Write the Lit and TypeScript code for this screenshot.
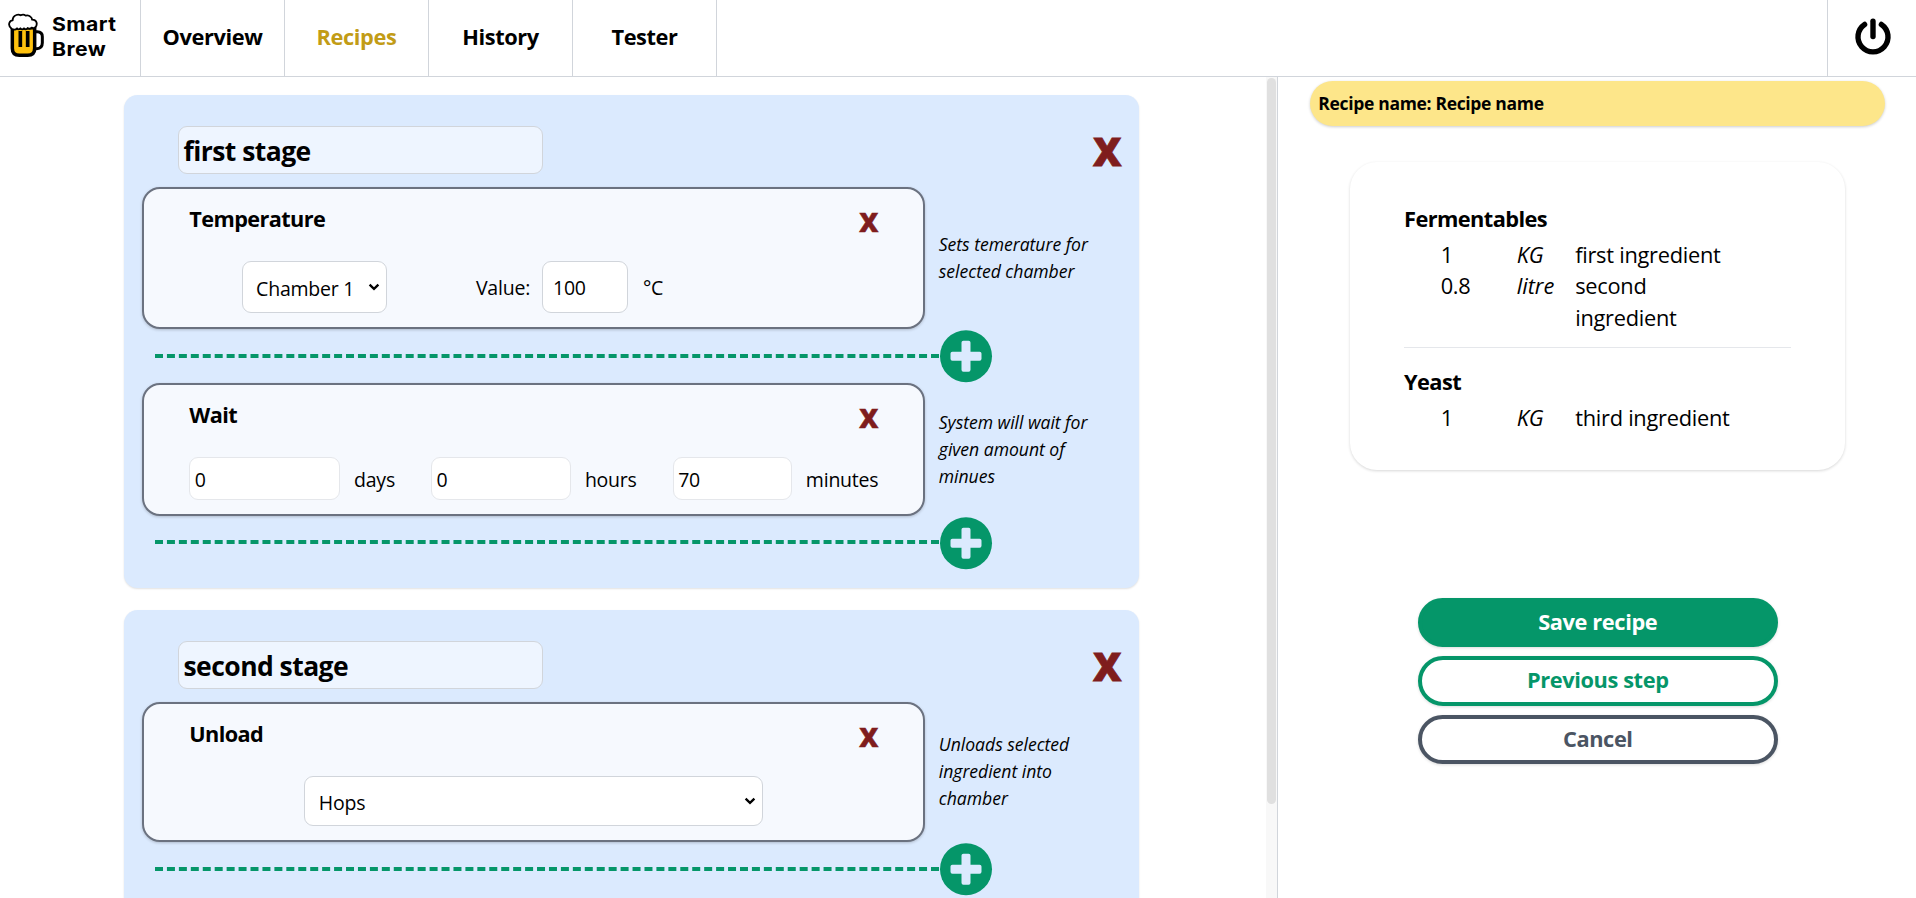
import { LitElement, html, css } from "lit";
import { customElement, property } from "lit/decorators.js";
import { classMap } from "lit/directives/class-map.js";

const base = css`
  * {
    box-sizing: border-box;
  }
  input,
  select,
  button {
    font: inherit;
    color: inherit;
    margin: 0;
    letter-spacing: inherit;
  }
`;

@customElement("app-header")
class AppHeader extends LitElement {
  static styles = [
    base,
    css`
      :host {
        display: flex;
        height: 77px;
        border-bottom: 1px solid #d1d5db;
        background: #fff;
      }
      .logo {
        display: flex;
        align-items: flex-start;
        width: 141px;
        padding: 13px 0 0 8px;
        border-right: 1px solid #d1d5db;
      }
      .mug {
        width: 37px;
        height: 45px;
        flex: none;
      }
      .brand {
        font: 700 19px/24.5px Inter, sans-serif;
        letter-spacing: 0.4px;
        margin: 0 0 0 6.5px;
        transform: scaleX(1.115);
        transform-origin: left;
      }
      .tab {
        width: 144px;
        height: 76px;
        border-right: 1px solid #d1d5db;
        text-align: center;
        font-size: 21.8px;
        font-weight: 700;
        line-height: 73px;
        letter-spacing: -0.4px;
      }
      .active {
        color: #c29c16;
      }
      .power {
        margin-left: auto;
        width: 89px;
        border-left: 1px solid #d1d5db;
        padding: 17px 0 0 26px;
      }
      .power svg {
        width: 38px;
        height: 38px;
        display: block;
      }
    `,
  ];
  render() {
    const tabs = ["Overview", "Recipes", "History", "Tester"];
    return html`
      <div class="logo">
        <svg class="mug" viewBox="24 38 111 135">
          <path d="M104 94h8q15 0 15 15v18q0 17-17 18h-6" fill="none" stroke="#000" stroke-width="9" />
          <path d="M37 82v62q0 21 21 21h25q21 0 21-21V82z" fill="#ffc20e" stroke="#000" stroke-width="10.5" />
          <path
            d="M35 85Q25 78 28 68q3-8 10-8Q38 48 49 44q7-3 13 1 8-5 15 1 8-3 14 3 6 5 5 9 12 0 14 10 1 9-4 13-5 4-11 1-5 6-12 1-5 7-11 1-6 6-11 0-5 6-10 0-6 7-16 1z"
            fill="#fff" stroke="#000" stroke-width="5.5" stroke-linejoin="round"
          />
          <path d="M61 92v48M83 92v48" stroke="#000" stroke-width="11" />
        </svg>
        <div class="brand">Smart<br />Brew</div>
      </div>
      ${tabs.map((t) => html`<div class=${classMap({ tab: true, active: t === "Recipes" })}>${t}</div>`)}
      <div class="power">
        <svg viewBox="0 0 38 38" fill="none" stroke="#000" stroke-linecap="round">
          <path d="M10.6 7.4a15 15 0 1 0 16.8 0" stroke-width="5.4" />
          <path d="M19 4.2v15.4" stroke-width="5.4" />
        </svg>
      </div>
    `;
  }
}

@customElement("recipe-step")
class RecipeStep extends LitElement {
  @property() name = "";
  @property() note = "";
  static styles = [
    base,
    css`
      :host {
        display: block;
      }
      .row {
        display: flex;
        align-items: center;
      }
      .card {
        width: 783px;
        flex: none;
        border: 2px solid #6b7280;
        border-radius: 18px;
        background: #f6f9fe;
        box-shadow: 0 1px 3px rgba(0, 0, 0, 0.2);
        padding: 0 44.6px 14px 45.3px;
      }
      .head {
        height: 72px;
        display: flex;
        justify-content: space-between;
        align-items: flex-start;
        padding-top: 14px;
      }
      .title {
        font-size: 21.7px;
        font-weight: 700;
        line-height: 32px;
        letter-spacing: -0.6px;
      }
      .remove {
        font-size: 26.5px;
        font-weight: 800;
        line-height: 39px;
        color: #7f1d1d;
        -webkit-text-stroke: 0.5px #7f1d1d;
      }
      .note {
        margin-left: 13.8px;
        width: 180px;
        font-size: 17.6px;
        line-height: 27px;
        font-style: italic;
        letter-spacing: -0.03px;
      }
      .connector {
        display: flex;
        align-items: flex-start;
        height: 54.2px;
        padding-left: 13px;
      }
      .dash {
        width: 784px;
        margin-top: 24.9px;
        border-top: 4px dashed #059669;
      }
      .plus {
        width: 53px;
        height: 53px;
        margin: 1.4px 0 0 1px;
      }
    `,
  ];
  render() {
    return html`
      <div class="row">
        <div class="card">
          <div class="head">
            <span class="title">${this.name}</span>
            <span class="remove">X</span>
          </div>
          <slot></slot>
        </div>
        <div class="note">${this.note}</div>
      </div>
      <div class="connector">
        <div class="dash"></div>
        <svg class="plus" viewBox="0 0 53 53">
          <circle cx="26" cy="26.2" r="26" fill="#059669" />
          <path
            d="M23.4 10.7h5.2q1.9 0 1.9 1.9v9.1h9.1q1.9 0 1.9 1.9v5.2q0 1.9-1.9 1.9h-9.1v9.1q0 1.9-1.9 1.9h-5.2q-1.9 0-1.9-1.9v-9.1h-9.1q-1.9 0-1.9-1.9v-5.2q0-1.9 1.9-1.9h9.1v-9.1q0-1.9 1.9-1.9z"
            fill="#dbeafe"
          />
        </svg>
      </div>
    `;
  }
}

@customElement("recipe-stage")
class RecipeStage extends LitElement {
  @property() name = "";
  static styles = [
    base,
    css`
      :host {
        display: block;
        flex: none;
        width: 1015.6px;
        padding: 0 17.6px 18.6px 18.4px;
        border-radius: 13.5px;
        background: #dbeafe;
        box-shadow: 0 1px 2px rgba(0, 0, 0, 0.12);
      }
      .head {
        display: flex;
        justify-content: space-between;
        align-items: flex-start;
        height: 92px;
        padding: 31.4px 0 0 36px;
      }
      .name {
        width: 365px;
        height: 47.3px;
        border: 1px solid #d1d5db;
        border-radius: 9px;
        background: #eef5ff;
        padding: 2px 4.5px 0;
        font-size: 26.5px;
        font-weight: 700;
        letter-spacing: -0.55px;
      }
      .remove {
        font-size: 39.5px;
        font-weight: 800;
        line-height: 48px;
        margin: 0.6px 0 0;
        color: #7f1d1d;
        -webkit-text-stroke: 0.8px #7f1d1d;
      }
    `,
  ];
  render() {
    return html`
      <div class="head">
        <input class="name" .value=${this.name} />
        <span class="remove">X</span>
      </div>
      <slot></slot>
    `;
  }
}

@customElement("recipe-summary")
class RecipeSummary extends LitElement {
  static styles = [
    base,
    css`
      :host {
        display: flex;
        flex-direction: column;
        align-items: center;
        width: 639px;
        border-left: 1px solid #d1d5db;
        padding: 4px 0 0 1.5px;
      }
      .name {
        width: 575px;
        height: 45px;
        border-radius: 23px;
        background: #fde68a;
        box-shadow: 0 1px 3px rgba(0, 0, 0, 0.2);
        padding-left: 8px;
        font-size: 17.5px;
        font-weight: 700;
        line-height: 45px;
        letter-spacing: -0.32px;
      }
      .list {
        width: 495.4px;
        height: 308px;
        margin-top: 35.5px;
        border-radius: 27px;
        box-shadow: 0 1px 3px rgba(0, 0, 0, 0.16);
        padding: 41.5px 54px 0;
      }
      .group + .group {
        border-top: 1px solid #e5e7eb;
        margin-top: 13.5px;
        padding-top: 18px;
      }
      .title {
        font-size: 21.8px;
        font-weight: 700;
        line-height: 31.5px;
        letter-spacing: -0.6px;
        margin-bottom: 4.5px;
      }
      .item {
        display: grid;
        grid-template-columns: 76px 58.5px 162px;
        padding-left: 36.6px;
        font-size: 21.8px;
        line-height: 31.4px;
        letter-spacing: -0.26px;
      }
      .unit {
        font-style: italic;
        letter-spacing: 0;
      }
      .actions {
        width: 360px;
        margin-top: 128px;
        display: grid;
        gap: 9px;
      }
      .btn {
        height: 49.5px;
        border: 4px solid #059669;
        border-radius: 25px;
        background: #fff;
        color: #059669;
        box-shadow: 0 1px 3px rgba(0, 0, 0, 0.14);
        font-size: 21.8px;
        font-weight: 700;
        line-height: 38px;
        letter-spacing: -0.4px;
        padding: 0 0 1px;
      }
      .primary {
        background: #059669;
        color: #fff;
      }
      .neutral {
        border-color: #4b5563;
        color: #4b5563;
      }
    `,
  ];
  render() {
    const groups = [
      { title: "Fermentables", items: [["1", "KG", "first ingredient"], ["0.8", "litre", "second ingredient"]] },
      { title: "Yeast", items: [["1", "KG", "third ingredient"]] },
    ];
    return html`
      <div class="name">Recipe name: Recipe name</div>
      <div class="list">
        ${groups.map(
          (g) => html`<div class="group">
            <div class="title">${g.title}</div>
            ${g.items.map(
              ([amount, unit, what]) => html`<div class="item">
                <span>${amount}</span><span class="unit">${unit}</span><span>${what}</span>
              </div>`
            )}
          </div>`
        )}
      </div>
      <div class="actions">
        <button class="btn primary">Save recipe</button>
        <button class="btn">Previous step</button>
        <button class="btn neutral">Cancel</button>
      </div>
    `;
  }
}

@customElement("app-root")
class AppRoot extends LitElement {
  static styles = [
    base,
    css`
      :host {
        display: flex;
        flex-direction: column;
        height: 898px;
        overflow: hidden;
        background: #fff;
        color: #000;
        font-family: "Open Sans", "Noto Sans", sans-serif;
      }
      .main {
        display: flex;
        flex: 1;
        min-height: 0;
      }
      .stages {
        display: flex;
        flex-direction: column;
        gap: 21.6px;
        flex: 1;
        overflow: hidden;
        padding: 18px 0 0 123.6px;
      }
      .track {
        width: 11px;
        background: #f8f8f8;
        padding-top: 1px;
      }
      .thumb {
        width: 9px;
        height: 726px;
        margin-left: 1px;
        border-radius: 5px;
        background: #e0e0e0;
      }
      .fields {
        display: flex;
        align-items: center;
        font-size: 19.5px;
        line-height: 28px;
        letter-spacing: -0.22px;
      }
      .box {
        border: 1px solid #d1d5db;
        border-radius: 9px;
        background: #fff;
        padding: 1px 9px 0;
      }
      .pick {
        display: grid;
        grid-template-columns: 1fr;
        align-items: center;
      }
      .pick select {
        grid-area: 1 / 1;
        appearance: none;
        width: 100%;
        height: 100%;
        padding: 4px 13px 0 13.5px;
      }
      .pick svg {
        grid-area: 1 / 1;
        justify-self: end;
        width: 12px;
        height: 8px;
        margin-right: 7px;
        pointer-events: none;
      }
      .temp {
        padding-left: 52.3px;
        height: 51.7px;
      }
      .chamber {
        width: 145px;
        height: 51.7px;
      }
      .label {
        width: 66px;
        margin-left: 89.4px;
      }
      .text {
        padding-top: 3px;
      }
      .degrees {
        width: 86.5px;
        height: 51.7px;
        margin-right: 14.5px;
        padding: 2px 9px 0 10px;
      }
      .wait {
        display: grid;
        grid-template-columns: repeat(3, minmax(0, 1fr));
        gap: 36px;
        height: 42.7px;
      }
      .span {
        display: flex;
        align-items: center;
        gap: 14px;
      }
      .count {
        flex: 1;
        min-width: 0;
        height: 42.7px;
        border-color: #e5e7eb;
        padding: 3px 4.5px 0;
      }
      .unload {
        justify-content: center;
        height: 50px;
      }
      .ingredient {
        width: 459px;
        height: 49.5px;
      }
    `,
  ];
  picker(kind: string, label: string) {
    return html`<div class="pick ${kind}">
      <select class="box"><option>${label}</option></select>
      <svg viewBox="0 0 12 8"><path d="M1.6 1.6 6 5.9l4.4-4.3" fill="none" stroke="#000" stroke-width="2.3" /></svg>
    </div>`;
  }
  render() {
    const spans = [["0", "days"], ["0", "hours"], ["70", "minutes"]];
    return html`
      <app-header></app-header>
      <div class="main">
        <div class="stages">
          <recipe-stage name="first stage">
            <recipe-step name="Temperature" note="Sets temerature for selected chamber">
              <div class="fields temp">
                ${this.picker("chamber", "Chamber 1")}
                <span class="label text">Value:</span>
                <input class="box degrees" value="100" />
                <span class="text">°C</span>
              </div>
            </recipe-step>
            <recipe-step name="Wait" note="System will wait for given amount of minues">
              <div class="fields wait">
                ${spans.map(
                  ([v, unit]) =>
                    html`<div class="span"><input class="box count" value=${v} /><span class="text">${unit}</span></div>`
                )}
              </div>
            </recipe-step>
          </recipe-stage>
          <recipe-stage name="second stage">
            <recipe-step name="Unload" note="Unloads selected ingredient into chamber">
              <div class="fields unload">${this.picker("ingredient", "Hops")}</div>
            </recipe-step>
          </recipe-stage>
        </div>
        <div class="track"><div class="thumb"></div></div>
        <recipe-summary></recipe-summary>
      </div>
    `;
  }
}
